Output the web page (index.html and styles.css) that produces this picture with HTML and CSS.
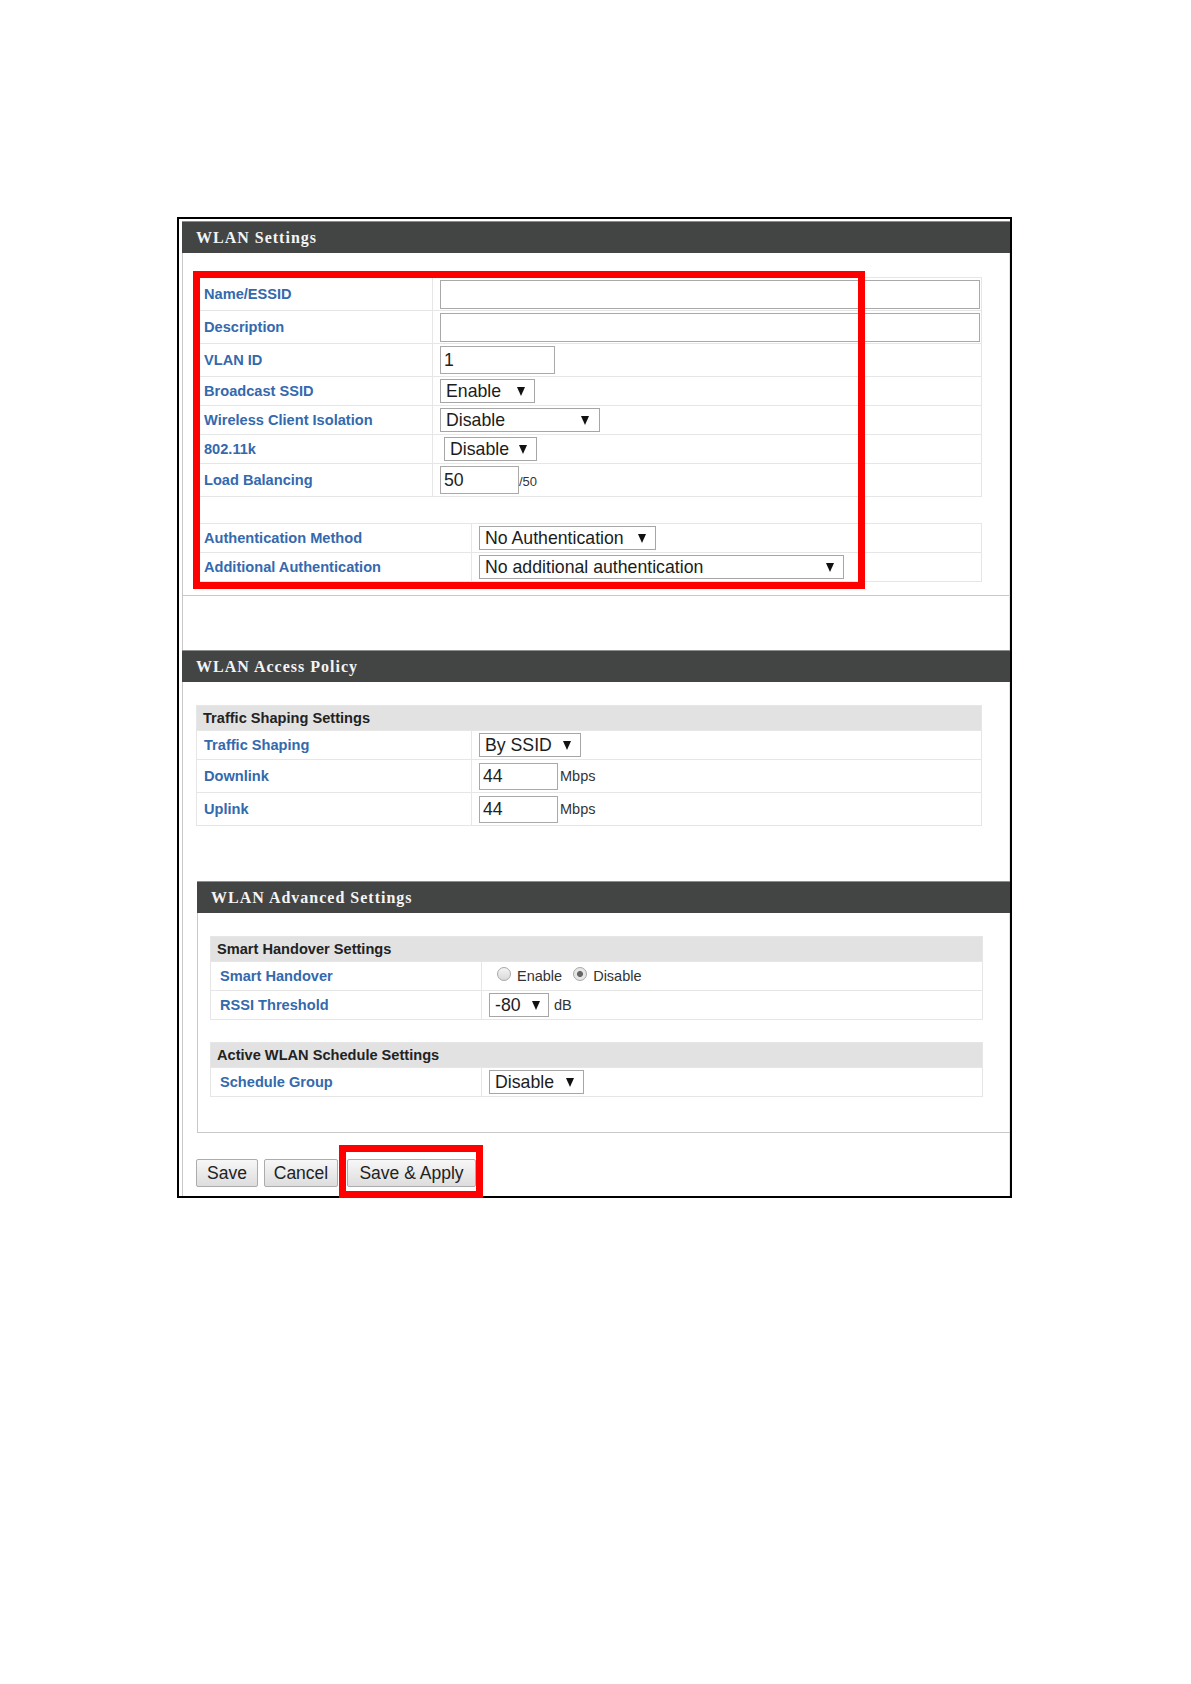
FILE: index.html
```html
<!DOCTYPE html>
<html lang="en">
<head>
    <meta charset="UTF-8">
    <title>WLAN Settings</title>
    <link rel="stylesheet" href="styles.css">
</head>
<body>
    <div class="frame">
        <div class="page">

            <div class="hd">WLAN Settings</div>
            <div class="panel first">
                <div class="tbl">
                    <div class="row tall">
                        <div class="lbl w236">Name/ESSID</div>
                        <div class="val"><input class="in in-wide" type="text" value=""></div>
                    </div>
                    <div class="row tall">
                        <div class="lbl w236">Description</div>
                        <div class="val"><input class="in in-wide" type="text" value=""></div>
                    </div>
                    <div class="row tall">
                        <div class="lbl w236">VLAN ID</div>
                        <div class="val"><input class="in in-vlan" type="text" value="1"></div>
                    </div>
                    <div class="row">
                        <div class="lbl w236">Broadcast SSID</div>
                        <div class="val"><span class="sel s-95">Enable</span></div>
                    </div>
                    <div class="row">
                        <div class="lbl w236">Wireless Client Isolation</div>
                        <div class="val"><span class="sel s-160">Disable</span></div>
                    </div>
                    <div class="row">
                        <div class="lbl w236">802.11k</div>
                        <div class="val"><span class="sel s-93 nudge">Disable</span></div>
                    </div>
                    <div class="row tall">
                        <div class="lbl w236">Load Balancing</div>
                        <div class="val"><input class="in in-num" type="text" value="50"><span class="unit small">/50</span></div>
                    </div>
                </div>

                <div class="tbl gap">
                    <div class="row">
                        <div class="lbl w275">Authentication Method</div>
                        <div class="val"><span class="sel s-177">No Authentication</span></div>
                    </div>
                    <div class="row">
                        <div class="lbl w275">Additional Authentication</div>
                        <div class="val"><span class="sel s-365">No additional authentication</span></div>
                    </div>
                </div>

                <div class="mark mark-settings"></div>
            </div>

            <div class="hd sec">WLAN Access Policy</div>
            <div class="panel">
                <div class="tbl">
                    <div class="row head">Traffic Shaping Settings</div>
                    <div class="row">
                        <div class="lbl w275">Traffic Shaping</div>
                        <div class="val"><span class="sel s-102">By SSID</span></div>
                    </div>
                    <div class="row tall">
                        <div class="lbl w275">Downlink</div>
                        <div class="val"><input class="in in-rate" type="text" value="44"><span class="unit">Mbps</span></div>
                    </div>
                    <div class="row tall">
                        <div class="lbl w275">Uplink</div>
                        <div class="val"><input class="in in-rate" type="text" value="44"><span class="unit">Mbps</span></div>
                    </div>
                </div>
            </div>

            <div class="adv">
                <div class="hd">WLAN Advanced Settings</div>
                <div class="panel boxed">
                    <div class="tbl">
                        <div class="row head">Smart Handover Settings</div>
                        <div class="row">
                            <div class="lbl w271">Smart Handover</div>
                            <div class="val">
                                <span class="radio"></span><span class="opt">Enable</span>
                                <span class="radio on"></span><span class="opt">Disable</span>
                            </div>
                        </div>
                        <div class="row">
                            <div class="lbl w271">RSSI Threshold</div>
                            <div class="val"><span class="sel s-60">-80</span><span class="unit db">dB</span></div>
                        </div>
                    </div>

                    <div class="tbl gap-sm">
                        <div class="row head">Active WLAN Schedule Settings</div>
                        <div class="row">
                            <div class="lbl w271">Schedule Group</div>
                            <div class="val"><span class="sel s-95">Disable</span></div>
                        </div>
                    </div>
                </div>
            </div>

            <div class="buttons">
                <button class="btn b-save">Save</button>
                <button class="btn b-cancel">Cancel</button>
                <span class="hl"><button class="btn b-apply">Save &amp; Apply</button></span>
            </div>

        </div>
    </div>
</body>
</html>
```

FILE: styles.css
```css
body {
    margin: 0;
    background: #fff;
    font-family: "Liberation Sans", Arial, sans-serif;
    color: #222;
}

.frame {
    margin: 217px 0 0 177px;
    width: 835px;
    height: 981px;
    border: 2px solid #000;
    box-sizing: border-box;
    padding: 2px 0 0 3px;
}

.page {
    height: 100%;
    box-sizing: border-box;
    border-left: 1px solid #c8c8c8;
    border-right: 1px solid #e4e4e4;
}

/* dark section title bars */
.hd {
    height: 31px;
    line-height: 31px;
    margin: 0 -1px;
    padding-left: 14px;
    background: #434545;
    border-top: 1px solid #8e8e8e;
    color: #f4f4f4;
    font-family: "Liberation Serif", "Times New Roman", serif;
    font-weight: bold;
    font-size: 16px;
    letter-spacing: 1px;
}

.hd.sec {
    margin-top: 54px;
}

.panel {
    position: relative;
    padding: 23px 27px 0 13px;
}

.panel.first {
    padding-top: 24px;
    padding-bottom: 13px;
    border-bottom: 1px solid #c8c8c8;
}

.adv {
    margin: 55px 0 0 14px;
}

.adv .hd {
    margin-left: 0;
}

.panel.boxed {
    padding: 23px 27px 35px 12px;
    border-left: 1px solid #c8c8c8;
    border-bottom: 1px solid #c8c8c8;
    margin-right: -1px;
}

/* settings tables */
.tbl {
    border: 1px solid #e6e6e6;
}

.tbl.gap {
    margin-top: 26px;
}

.tbl.gap-sm {
    margin-top: 22px;
}

.row {
    display: flex;
    height: 28px;
}

.row + .row {
    border-top: 1px solid #e6e6e6;
}

.row.tall {
    height: 32px;
}

.row.head {
    height: 24px;
    align-items: center;
    padding-left: 6px;
    background: #e2e2e2;
    font-weight: bold;
    font-size: 14.6px;
    color: #222;
}

.lbl {
    display: flex;
    align-items: center;
    box-sizing: border-box;
    padding-left: 7px;
    border-right: 1px solid #e6e6e6;
    color: #3469ae;
    font-weight: bold;
    font-size: 14.6px;
}

.w236 { width: 236px; }
.w275 { width: 275px; }
.w271 { width: 271px; padding-left: 9px; }

.val {
    flex: 1;
    display: flex;
    align-items: center;
    padding-left: 7px;
}

.in {
    height: 29px;
    box-sizing: border-box;
    border: 1px solid #a9a9a9;
    padding: 0 3px;
    font-family: "Liberation Sans", Arial, sans-serif;
    font-size: 17.7px;
    color: #222;
    background: #fff;
}

.in-wide { width: 540px; }
.in-vlan { width: 115px; height: 28px; }
.in-num { width: 79px; height: 28px; }
.in-rate { width: 79px; height: 27px; }

.sel {
    display: inline-flex;
    align-items: center;
    justify-content: space-between;
    height: 24px;
    box-sizing: border-box;
    border: 1px solid #a6a6a6;
    padding: 0 9px 0 5px;
    font-size: 17.7px;
    color: #1c1c1c;
    background: #fff;
}

.sel::after {
    content: "";
    border-left: 4.5px solid transparent;
    border-right: 4.5px solid transparent;
    border-top: 9px solid #111;
}

.s-60 { width: 60px; padding-right: 8px; }
.s-93 { width: 93px; }
.s-95 { width: 95px; }
.s-102 { width: 102px; }
.s-160 { width: 160px; padding-right: 10px; }
.s-177 { width: 177px; }
.s-365 { width: 365px; }

.nudge { margin-left: 4px; }

.unit {
    font-size: 14.5px;
    color: #333;
    margin-left: 2px;
}

.unit.small {
    font-size: 13px;
    margin-left: 0;
    padding-top: 2px;
}

.unit.db {
    margin-left: 5px;
}

.radio {
    width: 14px;
    height: 14px;
    margin: 0 6px 0 8px;
    box-sizing: border-box;
    border-radius: 50%;
    border: 1px solid #a8a8a8;
    background: linear-gradient(#f4f4f4, #d9d9d9);
    position: relative;
    top: -2px;
}

.radio.on {
    margin-left: 11px;
    background: radial-gradient(circle, #666 0 2.6px, #e6e6e6 3.4px);
}

.opt {
    font-size: 14.5px;
    color: #333;
}

/* red callout boxes */
.mark {
    position: absolute;
    border: 7px solid #f00;
    box-sizing: border-box;
    pointer-events: none;
}

.mark-settings {
    left: 10px;
    top: 18px;
    width: 672px;
    height: 318px;
}

.buttons {
    display: flex;
    align-items: center;
    margin-top: 26px;
    padding-left: 13px;
}

.btn {
    height: 28px;
    padding: 0;
    border: 1px solid #acacac;
    border-radius: 2px;
    background: linear-gradient(#f7f7f7, #dddddd);
    font-family: "Liberation Sans", Arial, sans-serif;
    font-size: 17.5px;
    color: #222;
}

.b-save { width: 62px; }
.b-cancel { width: 74px; margin-left: 6px; }
.b-apply { width: 129px; }

.hl {
    position: relative;
    display: inline-flex;
    margin-left: 9px;
}

.hl::after {
    content: "";
    position: absolute;
    left: -8px;
    top: -14px;
    right: -7px;
    bottom: -11px;
    border: 7px solid #f00;
}
```
